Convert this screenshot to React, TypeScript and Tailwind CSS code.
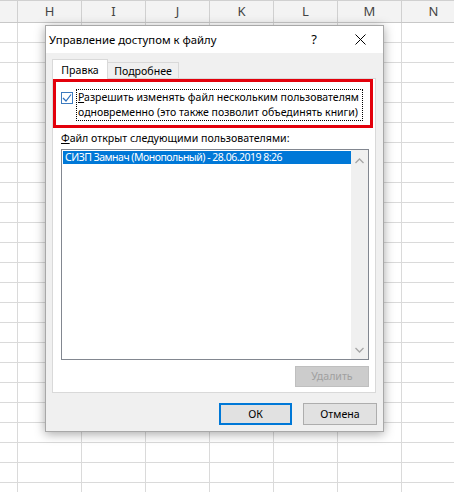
import React from "react";

const cols = ["H", "I", "J", "K", "L", "M", "N"];
const rows = Array.from({ length: 24 });

function Grid() {
  return (
    <div className="flex flex-col w-[454px] h-[492px] overflow-hidden bg-white">
      <div className="flex h-[23px] shrink-0 bg-[#f3f3f3] border-t border-t-[#d0d0d0] border-b border-b-[#c8c8c8]">
        <div className="w-[18px] shrink-0 border-r border-[#d0d0d0]" />
        {cols.map((c) => (
          <div
            key={c}
            className="w-[64px] shrink-0 border-r border-[#d0d0d0] flex items-center justify-center text-[13px] text-[#444] leading-none"
          >
            {c}
          </div>
        ))}
      </div>
      {rows.map((_, i) => (
        <div key={i} className="flex h-[20px] shrink-0 border-b border-[#dadada]">
          <div className="w-[18px] shrink-0 border-r border-[#dadada]" />
          {cols.map((c) => (
            <div key={c} className="w-[64px] shrink-0 border-r border-[#dadada]" />
          ))}
        </div>
      ))}
    </div>
  );
}

function ChevronUp() {
  return (
    <svg width="9" height="6" viewBox="0 0 9 6" className="block">
      <path d="M0.5 5 L4.5 1 L8.5 5" fill="none" stroke="#a6a6a6" strokeWidth="1.3" />
    </svg>
  );
}
function ChevronDown() {
  return (
    <svg width="9" height="6" viewBox="0 0 9 6" className="block">
      <path d="M0.5 1 L4.5 5 L8.5 1" fill="none" stroke="#a6a6a6" strokeWidth="1.3" />
    </svg>
  );
}

function Dialog() {
  return (
    <div className="absolute left-[45px] top-[25px] w-[339px] h-[407px] flex flex-col bg-[#f0f0f0] border border-[#a8a8a8] shadow-[0_2px_10px_rgba(0,0,0,0.35)]">
      {/* title bar */}
      <div className="h-[27px] shrink-0 bg-white flex items-center pl-[3px] text-[11.3px] text-[#000]">
        <span className="flex-1 leading-none whitespace-nowrap">Управление доступом к файлу</span>
        <span className="w-[10px] text-center mr-[36px] text-[13px] leading-none">?</span>
        <svg width="11" height="11" viewBox="0 0 11 11" className="mr-[17px]">
          <path d="M0.5 0.5 L10.5 10.5 M10.5 0.5 L0.5 10.5" stroke="#000" strokeWidth="1" />
        </svg>
      </div>
      {/* body */}
      <div className="flex-1 flex flex-col px-[6px] pt-[6px] text-[10.6px]">
        {/* tabs */}
        <div className="flex items-end h-[20px] relative z-10">
          <div className="w-[56px] h-[20px] bg-white border border-[#d9d9d9] border-b-0 flex items-center justify-center leading-none pt-[2px]">
            Правка
          </div>
          <div className="w-[71px] h-[17px] border border-l-0 border-[#d9d9d9] border-b-0 flex items-center justify-center leading-none">
            Подробнее
          </div>
        </div>
        {/* panel */}
        <div className="w-[324px] h-[315px] -mt-[1px] bg-white border border-[#d9d9d9] flex flex-col">
          <div className="w-[320px] h-[49px] shrink-0 border-[3px] border-[#e3000b] flex items-start pt-[7px] pl-[5px]">
            <div className="mt-[3px] w-[12px] h-[12px] border border-[#3d7bbf] bg-white flex items-center justify-center shrink-0">
              <svg width="10" height="10" viewBox="0 0 10 10">
                <path d="M1 5 L4 8 L9 1.5" fill="none" stroke="#2a6fbd" strokeWidth="1.2" />
              </svg>
            </div>
            <div className="ml-[3px] border border-dotted border-[#000] px-[1px] text-[10.5px] leading-[15px] text-black w-[287px] h-[32px] whitespace-nowrap">
              <span className="underline">Р</span>азрешить изменять файл нескольким пользователям
              <br />
              одновременно (это также позволит объединять книги)
            </div>
          </div>
          <div className="ml-[8px] mt-[3px] leading-[15px] text-black whitespace-nowrap">
            <span className="underline">Ф</span>айл открыт следующими пользователями:
          </div>
          <div className="ml-[8px] mt-[3px] w-[308px] h-[211px] shrink-0 border border-[#828790] flex">
            <div className="flex-1 pt-[1px] pl-[1px]">
              <div className="h-[13px] bg-[#0078d7] text-white text-[10.5px] tracking-[-0.5px] leading-[13px] pl-[2px] whitespace-nowrap overflow-hidden">
                СИЗП Замнач (Монопольный) - 28.06.2019 8:26
              </div>
            </div>
            <div className="w-[17px] bg-[#f0f0f0] flex flex-col items-center justify-between pt-[8px] pb-[6px]">
              <ChevronUp />
              <ChevronDown />
            </div>
          </div>
          <div className="flex justify-end mt-[6px] pr-[6px]">
            <div className="w-[74px] h-[21px] bg-[#cccccc] border border-[#bfbfbf] flex items-center justify-center leading-none text-[#a0a0a0]">
              Удалить
            </div>
          </div>
        </div>
        {/* buttons */}
        <div className="flex justify-end gap-[11px] mt-[10px]">
          <div className="w-[73px] h-[22px] bg-[#e1e1e1] border-2 border-[#0078d7] flex items-center justify-center leading-none text-black">
            ОК
          </div>
          <div className="w-[74px] h-[22px] bg-[#e1e1e1] border border-[#adadad] flex items-center justify-center leading-none text-black">
            Отмена
          </div>
        </div>
      </div>
    </div>
  );
}

export default function App() {
  return (
    <div className="relative w-[454px] h-[492px] overflow-hidden" style={{ fontFamily: '"Noto Sans", "Open Sans", sans-serif' }}>
      <Grid />
      <Dialog />
    </div>
  );
}
